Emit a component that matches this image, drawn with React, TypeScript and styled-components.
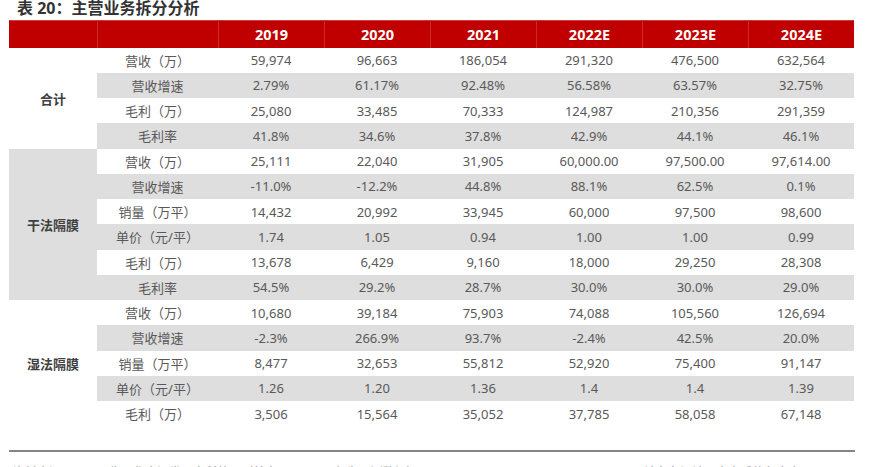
import React from "react";
import styled, { createGlobalStyle } from "styled-components";

const GlobalStyle = createGlobalStyle`
  html, body { margin: 0; padding: 0; background: #ffffff; }
  body {
    font-family: "Noto Sans", "Noto Sans CJK SC", sans-serif;
    overflow: hidden;
  }
`;

const Page = styled.div`
  width: 877px;
  height: 467px;
  display: flex;
  flex-direction: column;
  overflow: hidden;
  & > * { flex: none; }
`;

const Title = styled.div`
  height: 20px;
  padding-left: 17px;
  font-size: 16px;
  line-height: 16px;
  font-weight: 700;
  color: #333333;
  text-spacing-trim: space-all;
  font-family: "Noto Sans", "Noto Sans CJK SC", sans-serif;
`;

const Table = styled.div`
  margin-left: 9px;
  width: 845px;
  display: flex;
  flex-direction: column;
`;

const COLS = "88px 121px repeat(6, 106px)";

const HeaderRow = styled.div`
  display: grid;
  grid-template-columns: ${COLS};
  height: 27.5px;
  background: #c00000;
  box-shadow: inset 0 1px 0 #d33b3b;
`;

const HeaderCell = styled.div<{ $line?: boolean }>`
  display: flex;
  align-items: center;
  justify-content: center;
  color: #ffffff;
  font-weight: 700;
  font-size: 14.5px;
  border-left: 1px solid ${(p) => (p.$line ? "#cc2a2a" : "transparent")};
`;

const Section = styled.div`
  display: flex;
`;

const GroupCell = styled.div<{ $shaded: boolean }>`
  width: 88px;
  flex: none;
  display: flex;
  align-items: center;
  justify-content: center;
  background: ${(p) => (p.$shaded ? "#dedede" : "#ffffff")};
  font-family: "Noto Sans CJK SC", sans-serif;
  font-weight: 700;
  font-size: 13px;
  color: #3f3f3f;
`;

const Rows = styled.div`
  display: flex;
  flex-direction: column;
`;

const Row = styled.div<{ $shaded: boolean }>`
  display: grid;
  grid-template-columns: 121px repeat(6, 106px);
  height: 25.25px;
  background: ${(p) => (p.$shaded ? "#dedede" : "#ffffff")};
`;

const Cell = styled.div`
  display: flex;
  align-items: center;
  justify-content: center;
  font-size: 13px;
  color: #595959;
  white-space: nowrap;
`;

const LabelCell = styled(Cell)`
  font-family: "Noto Sans", "Noto Sans CJK SC", sans-serif;
  text-spacing-trim: space-all;
`;

const Spacer = styled.div`
  height: 24px;
`;

const Rule = styled.div`
  margin-left: 9px;
  width: 846px;
  height: 2px;
  background: #858585;
`;

const Footer = styled.div`
  display: flex;
  justify-content: space-between;
  padding: 13px 30px 0 13px;
  font-family: "Noto Sans CJK SC", sans-serif;
  font-size: 12px;
  line-height: 14px;
  color: #8c8c8c;
`;

type RowData = { label: string; values: string[] };
type SectionData = { name: string; rows: RowData[] };

const years = ["2019", "2020", "2021", "2022E", "2023E", "2024E"];

const sections: SectionData[] = [
  {
    name: "合计",
    rows: [
      { label: "营收（万）", values: ["59,974", "96,663", "186,054", "291,320", "476,500", "632,564"] },
      { label: "营收增速", values: ["2.79%", "61.17%", "92.48%", "56.58%", "63.57%", "32.75%"] },
      { label: "毛利（万）", values: ["25,080", "33,485", "70,333", "124,987", "210,356", "291,359"] },
      { label: "毛利率", values: ["41.8%", "34.6%", "37.8%", "42.9%", "44.1%", "46.1%"] },
    ],
  },
  {
    name: "干法隔膜",
    rows: [
      { label: "营收（万）", values: ["25,111", "22,040", "31,905", "60,000.00", "97,500.00", "97,614.00"] },
      { label: "营收增速", values: ["-11.0%", "-12.2%", "44.8%", "88.1%", "62.5%", "0.1%"] },
      { label: "销量（万平）", values: ["14,432", "20,992", "33,945", "60,000", "97,500", "98,600"] },
      { label: "单价（元/平）", values: ["1.74", "1.05", "0.94", "1.00", "1.00", "0.99"] },
      { label: "毛利（万）", values: ["13,678", "6,429", "9,160", "18,000", "29,250", "28,308"] },
      { label: "毛利率", values: ["54.5%", "29.2%", "28.7%", "30.0%", "30.0%", "29.0%"] },
    ],
  },
  {
    name: "湿法隔膜",
    rows: [
      { label: "营收（万）", values: ["10,680", "39,184", "75,903", "74,088", "105,560", "126,694"] },
      { label: "营收增速", values: ["-2.3%", "266.9%", "93.7%", "-2.4%", "42.5%", "20.0%"] },
      { label: "销量（万平）", values: ["8,477", "32,653", "55,812", "52,920", "75,400", "91,147"] },
      { label: "单价（元/平）", values: ["1.26", "1.20", "1.36", "1.4", "1.4", "1.39"] },
      { label: "毛利（万）", values: ["3,506", "15,564", "35,052", "37,785", "58,058", "67,148"] },
    ],
  },
];

export default function App() {
  let rowIndex = 0;
  return (
    <>
      <GlobalStyle />
      <Page>
        <Title>表 20：主营业务拆分分析</Title>
        <Table>
          <HeaderRow>
            <HeaderCell />
            <HeaderCell $line />
            {years.map((y) => (
              <HeaderCell key={y} $line>
                {y}
              </HeaderCell>
            ))}
          </HeaderRow>
          {sections.map((s, si) => (
            <Section key={s.name}>
              <GroupCell $shaded={si === 1}>{s.name}</GroupCell>
              <Rows>
                {s.rows.map((r) => {
                  const shaded = rowIndex % 2 === 1;
                  rowIndex += 1;
                  return (
                    <Row key={r.label} $shaded={shaded}>
                      <LabelCell>{r.label}</LabelCell>
                      {r.values.map((v, i) => (
                        <Cell key={i}>{v}</Cell>
                      ))}
                    </Row>
                  );
                })}
              </Rows>
            </Section>
          ))}
        </Table>
        <Spacer />
        <Rule />
        <Footer>
          <span>资料来源：公司公告，华金证券研究所整理（其中2022-2024年为预测数据）</span>
          <span>请务必阅读正文之后的免责声明&nbsp;&nbsp;&nbsp;&nbsp;&nbsp;&nbsp;&nbsp;&nbsp;18</span>
        </Footer>
      </Page>
    </>
  );
}
